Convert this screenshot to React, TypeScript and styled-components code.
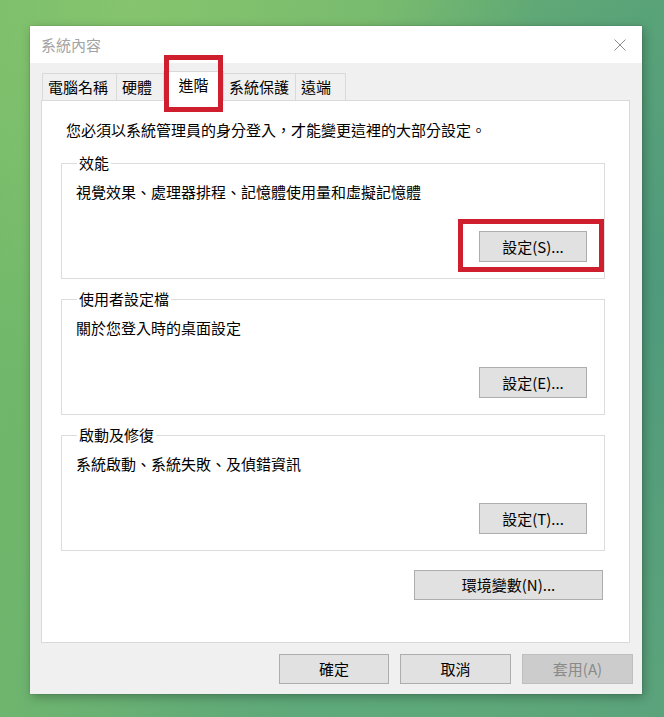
import React from 'react'
import styled, { createGlobalStyle } from 'styled-components'

const GlobalStyle = createGlobalStyle`
  html, body {
    margin: 0;
    padding: 0;
  }
  body {
    font-family: "Noto Sans CJK TC", "Noto Sans", sans-serif;
  }
`

const Desktop = styled.div`
  width: 664px;
  height: 717px;
  padding: 26px 0 0 30px;
  box-sizing: border-box;
  overflow: hidden;
  background:
    radial-gradient(circle at 20% 0%, #86c46e 0%, rgba(134, 196, 110, 0) 45%),
    radial-gradient(circle at 100% 40%, #4f9a7c 0%, rgba(79, 154, 124, 0) 50%),
    radial-gradient(circle at 50% 100%, #5ea97a 0%, rgba(94, 169, 122, 0) 45%),
    linear-gradient(110deg, #6fb868 0%, #70b56f 40%, #5ea777 70%, #5aa27c 100%);
`

const Window = styled.div`
  width: 612px;
  height: 668px;
  background: #f0f0f0;
  display: flex;
  flex-direction: column;
  box-shadow: 0 0 1px rgba(0, 0, 0, 0.35), 2px 3px 10px rgba(0, 0, 0, 0.28);
`

const TitleBar = styled.div`
  height: 37px;
  flex: none;
  background: #ffffff;
  display: flex;
  align-items: center;
  justify-content: space-between;
  padding: 0 16px 0 11px;
`

const Title = styled.span`
  font-size: 15px;
  line-height: 20px;
  color: #a3a3a3;
`

const CloseIcon = () => (
  <svg width="12" height="12" viewBox="0 0 12 12">
    <path d="M0.5 0.5 L11.5 11.5 M11.5 0.5 L0.5 11.5" stroke="#8c8c8c" strokeWidth="1" fill="none" />
  </svg>
)

const Body = styled.div`
  flex: 1;
  display: flex;
  flex-direction: column;
  padding: 8px 12px 10px 11px;
  min-height: 0;
`

const TabRow = styled.div`
  display: flex;
  align-items: flex-end;
  padding-left: 1px;
  margin-bottom: -1px;
  position: relative;
  z-index: 1;
`

const Tab = styled.div<{ $active?: boolean; $w: number }>`
  position: relative;
  box-sizing: border-box;
  width: ${p => p.$w}px;
  height: ${p => (p.$active ? '30px' : '28px')};
  padding: ${p => (p.$active ? '0 0 3px' : '0 0 0 5px')};
  margin-left: -1px;
  display: flex;
  align-items: center;
  justify-content: ${p => (p.$active ? 'center' : 'flex-start')};
  font-size: 15px;
  line-height: 20px;
  color: #000;
  white-space: nowrap;
  background: ${p => (p.$active ? '#ffffff' : '#f0f0f0')};
  border: 1px solid #d9d9d9;
  border-bottom-color: ${p => (p.$active ? '#ffffff' : '#d9d9d9')};
  &:first-child {
    margin-left: 0;
  }
`

const Highlight = styled.span<{ $t: number; $r: number; $b: number; $l: number }>`
  position: absolute;
  top: ${p => p.$t}px;
  right: ${p => p.$r}px;
  bottom: ${p => p.$b}px;
  left: ${p => p.$l}px;
  border: 5px solid #cf1f2e;
  pointer-events: none;
`

const Panel = styled.div`
  flex: 1;
  background: #ffffff;
  border: 1px solid #d9d9d9;
  padding: 19px 24px 0 19px;
  display: flex;
  flex-direction: column;
`

const Intro = styled.p`
  margin: 0 0 13px 5px;
  font-size: 15px;
  line-height: 20px;
  color: #000;
`

const Group = styled.fieldset`
  margin: 0 0 10px;
  padding: 0 17px 15px 14px;
  border: 1px solid #dcdcdc;
  height: 126px;
  box-sizing: border-box;
  min-width: 0;
`

const Legend = styled.legend`
  margin-left: 1px;
  padding: 0 2px;
  font-size: 15px;
  line-height: 20px;
  color: #000;
`

const GroupText = styled.div`
  margin-top: 9px;
  font-size: 15px;
  line-height: 20px;
  color: #000;
`

const ButtonRow = styled.div`
  margin-top: 29px;
  display: flex;
  justify-content: flex-end;
`

const Marked = styled.span`
  position: relative;
  display: inline-flex;
`

const Button = styled.button<{ $w: number; $h?: number }>`
  width: ${p => p.$w}px;
  height: ${p => p.$h ?? 31}px;
  box-sizing: border-box;
  background: #e1e1e1;
  border: 1px solid #adadad;
  font-family: "Noto Sans CJK TC", "Noto Sans", sans-serif;
  font-size: 15px;
  line-height: 20px;
  color: #000;
  padding: 0;
  &:disabled {
    background: #cccccc;
    border-color: #bfbfbf;
    color: #8a8a8a;
  }
`

const EnvRow = styled.div`
  margin-top: 9px;
  display: flex;
  justify-content: flex-end;
  padding-right: 2px;
`

const Footer = styled.div`
  flex: none;
  display: flex;
  justify-content: flex-end;
  gap: 11px;
  padding-top: 11px;
  margin-right: -3px;
`

const groups = [
  { title: '效能', text: '視覺效果、處理器排程、記憶體使用量和虛擬記憶體', button: '設定(S)...', marked: true },
  { title: '使用者設定檔', text: '關於您登入時的桌面設定', button: '設定(E)...', marked: false },
  { title: '啟動及修復', text: '系統啟動、系統失敗、及偵錯資訊', button: '設定(T)...', marked: false },
]

const tabs = [
  { label: '電腦名稱', w: 75 },
  { label: '硬體', w: 48 },
  { label: '進階', w: 61 },
  { label: '系統保護', w: 73 },
  { label: '遠端', w: 51 },
]

export default function App() {
  return (
    <>
      <GlobalStyle />
      <Desktop>
        <Window>
          <TitleBar>
            <Title>系統內容</Title>
            <CloseIcon />
          </TitleBar>
          <Body>
            <TabRow>
              {tabs.map(t => (
                <Tab key={t.label} $w={t.w} $active={t.label === '進階'}>
                  {t.label}
                  {t.label === '進階' && <Highlight $t={-17} $r={0} $b={-12} $l={0} />}
                </Tab>
              ))}
            </TabRow>
            <Panel>
              <Intro>您必須以系統管理員的身分登入，才能變更這裡的大部分設定。</Intro>
              {groups.map(g => (
                <Group key={g.title}>
                  <Legend>{g.title}</Legend>
                  <GroupText>{g.text}</GroupText>
                  <ButtonRow>
                    {g.marked ? (
                      <Marked>
                        <Button $w={108}>{g.button}</Button>
                        <Highlight $t={-12} $r={-17} $b={-10} $l={-21} />
                      </Marked>
                    ) : (
                      <Button $w={108}>{g.button}</Button>
                    )}
                  </ButtonRow>
                </Group>
              ))}
              <EnvRow>
                <Button $w={189} $h={30}>環境變數(N)...</Button>
              </EnvRow>
            </Panel>
            <Footer>
              <Button $w={110} $h={30}>確定</Button>
              <Button $w={111} $h={30}>取消</Button>
              <Button $w={111} $h={30} disabled>套用(A)</Button>
            </Footer>
          </Body>
        </Window>
      </Desktop>
    </>
  )
}
